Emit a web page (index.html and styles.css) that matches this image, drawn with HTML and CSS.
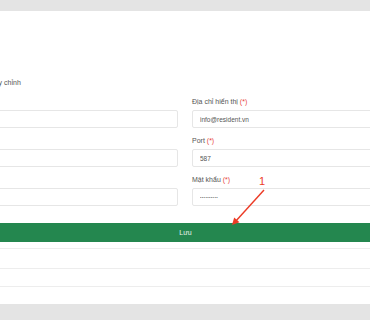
FILE: index.html
```html
<!DOCTYPE html>
<html lang="vi">
<head>
  <meta charset="UTF-8"/>
  <title>Cấu hình email</title>
  <link rel="stylesheet" href="styles.css">
</head>
<body>
  <div class="page">
    <div class="panel">
      <div class="section-title">Cấu hình máy chủ tùy chỉnh</div>

      <form class="form-grid">
        <div class="field">
          <label></label>
          <input type="text" value="">
        </div>
        <div class="field">
          <label>Địa chỉ hiển thị <span class="req">(*)</span></label>
          <input type="text" value="info@resident.vn">
        </div>
        <div class="field">
          <label></label>
          <input type="text" value="">
        </div>
        <div class="field">
          <label>Port <span class="req">(*)</span></label>
          <input type="text" value="587">
        </div>
        <div class="field">
          <label></label>
          <input type="text" value="">
        </div>
        <div class="field">
          <label>Mật khẩu <span class="req">(*)</span></label>
          <input class="pwd" type="text" value="••••••••••">
        </div>
      </form>

      <button class="save-btn" type="button">Lưu</button>

      <div class="rows">
        <div class="row"></div>
        <div class="row"></div>
        <div class="row"></div>
      </div>
    </div>

    <!-- annotation -->
    <div class="callout">
      <span class="callout-num">1</span>
      <svg width="40" height="40" viewBox="0 0 40 40">
        <line x1="33" y1="3" x2="4" y2="35" stroke="#ec3b26" stroke-width="1.4"/>
        <polygon points="1,38 3.2,30.5 8.5,35.3" fill="#ec3b26"/>
      </svg>
    </div>
  </div>
</body>
</html>
```

FILE: styles.css
```css
* { box-sizing:border-box; margin:0; padding:0 }
html, body {
  width:370px;
  height:320px;
  overflow:hidden;
  background:#e4e4e4;
  font-family:'Liberation Sans', Arial, Helvetica, sans-serif;
  color:#555;
}

.page {
  position:relative;
  padding-top:11px;
}

.panel {
  background:#fff;
  height:293px;
  padding-top:67px;
  margin-left:-62px;
  width:494px;
}

.section-title {
  font-size:7px;
  line-height:10px;
  color:#555;
  margin-bottom:9px;
  margin-left:-4px;
}

/* FORM */
.form-grid {
  display:grid;
  grid-template-columns:240px 240px;
  column-gap:14px;
  row-gap:8px;
}
.field label {
  display:block;
  font-size:7px;
  line-height:10px;
  height:10px;
  margin-bottom:3px;
  color:#555;
}
.req { color:#e8453c; }
.field input {
  display:block;
  width:100%;
  height:18px;
  border:1px solid #e6e6e6;
  border-radius:2px;
  padding:0 7px;
  font-family:inherit;
  font-size:6.5px;
  color:#555;
  background:#fff;
  outline:none;
}
.field input.pwd {
  font-size:4px;
  letter-spacing:0.4px;
  color:#666;
}

/* BUTTON */
.save-btn {
  display:block;
  margin-top:17px;
  width:100%;
  height:19px;
  border:none;
  background:#24874f;
  color:#e8f3ec;
  font-family:inherit;
  font-size:7px;
  padding-left:1px;
}

/* TABLE ROWS */
.rows { margin-top:6px; }
.row {
  border-top:1.5px solid #ededed;
  height:20px;
}
.row:nth-child(2) { height:18px; }

/* ANNOTATION */
.callout {
  position:absolute;
  left:231px;
  top:176px;
}
.callout-num {
  position:absolute;
  left:28px;
  top:0;
  font-size:11px;
  line-height:11px;
  color:#ec3b26;
}
.callout svg {
  position:absolute;
  left:0;
  top:11px;
}
```
